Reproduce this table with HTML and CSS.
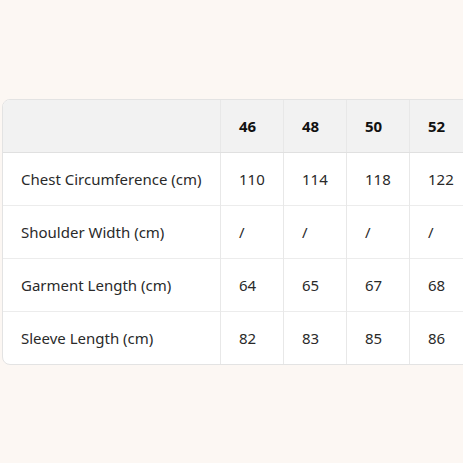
FILE: index.html
```html
<!DOCTYPE html>
<html lang="en">
<head>
<meta charset="utf-8">
<title>Size Chart</title>
<link rel="stylesheet" href="styles.css">
</head>
<body>
<main class="page">
  <div class="chart">
    <table class="size-table">
      <thead>
        <tr>
          <th class="label-col"></th>
          <th>46</th><th>48</th><th>50</th><th>52</th>
        </tr>
      </thead>
      <tbody>
        <tr><td class="label-col">Chest Circumference (cm)</td><td>110</td><td>114</td><td>118</td><td>122</td></tr>
        <tr><td class="label-col">Shoulder Width (cm)</td><td>/</td><td>/</td><td>/</td><td>/</td></tr>
        <tr><td class="label-col">Garment Length (cm)</td><td>64</td><td>65</td><td>67</td><td>68</td></tr>
        <tr><td class="label-col">Sleeve Length (cm)</td><td>82</td><td>83</td><td>85</td><td>86</td></tr>
      </tbody>
    </table>
  </div>
</main>
</body>
</html>
```
FILE: styles.css
```css
html, body {
  margin: 0;
  padding: 0;
  background: #fcf7f3;
  overflow: hidden;
}
body {
  font-family: "Noto Sans", "Open Sans", sans-serif;
  color: #222;
}
.page {
  padding: 99px 0 0 2px;
  width: 900px;
}
.chart {
  display: inline-block;
  border: 1px solid #e3e3e3;
  border-radius: 8px;
  overflow: hidden;
  background: #fff;
}
.size-table {
  border-collapse: collapse;
  font-size: 15px;
}
.size-table th,
.size-table td {
  height: 52px;
  padding: 0 18px;
  text-align: left;
  border-left: 1px solid #e8e8e8;
  border-top: 1px solid #ececec;
  width: 26px;
  white-space: nowrap;
}
.size-table tr > :first-child { border-left: none; }
.size-table tr > :last-child { width: 56px; }
.size-table thead th {
  border-top: none;
  background: #f2f2f2;
  font-weight: 700;
  border-bottom: 1px solid #e0e0e0;
  color: #111;
}
.size-table .label-col {
  width: 181px;
}
.size-table td { color: #2a2a2a; }
```
